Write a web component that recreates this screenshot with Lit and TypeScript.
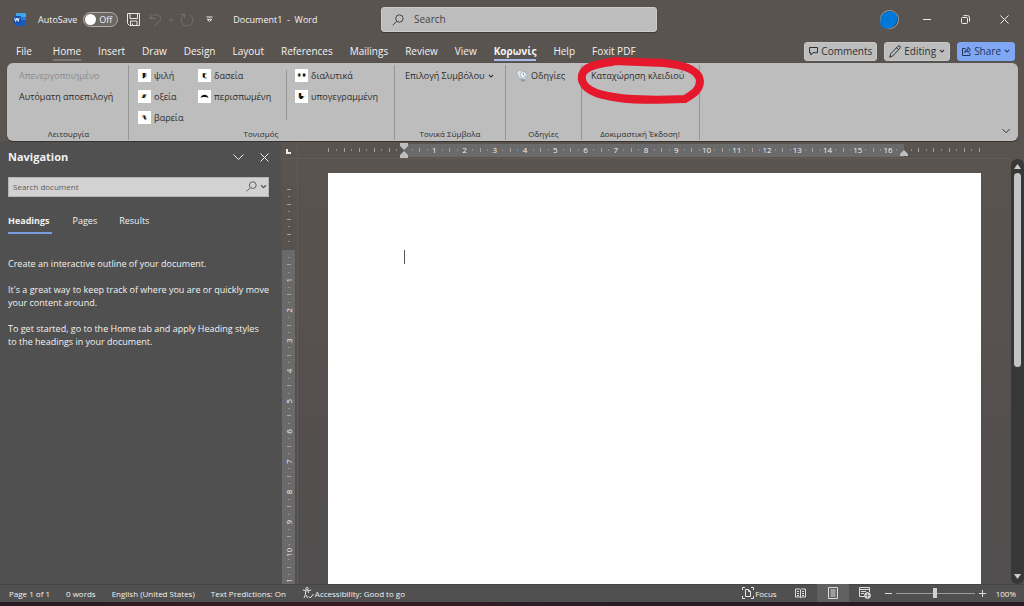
import { LitElement, html, svg, css } from "lit";
import { customElement } from "lit/decorators.js";
import { classMap } from "lit/directives/class-map.js";

const CM = 30.25;

const TABS = ["File", "Home", "Insert", "Draw", "Design", "Layout", "References", "Mailings", "Review", "View", "Κορωνίς", "Help", "Foxit PDF"];

const chevron = (size: number) => html`<svg width=${size} height=${size} viewBox="0 0 10 10" fill="none" stroke="currentColor" stroke-width=${size > 8 ? 1 : 1.8}><path d="M1.500 3.200 5 6.700 8.500 3.200" /></svg>`;

const GLYPHS: Record<string, unknown> = {
  psili: svg`<path d="M4.600 4h2.800v3.600L5.600 9.600 4.400 9l.8-1.800h-.8z" fill="#111"/><path d="M4 4h1v3H4z" fill="#e8a860"/><path d="M7.200 4h1.400v3.400L6.400 9.600l.8-2z" fill="#4a97d8"/>`,
  oxia: svg`<path d="M5.400 4.400h2.800L6.600 8H4z" fill="#111"/><path d="M4.400 4.600h1.200L4.200 8H3.200z" fill="#e8a860"/><path d="M7.800 4.400H9L7.400 7.800H6.200z" fill="#5b9bd5"/>`,
  varia: svg`<path d="M4.400 4.400H7.200l1 4H6.600z" fill="#111"/><path d="M3.600 4.400h1.400l1.400 3H5z" fill="#e8a860"/><path d="M7 4.400l1.200.6.4 3.400H8z" fill="#5b9bd5"/>`,
  dasia: svg`<path d="M4.800 4.200h2.600L6.600 6l.8 3H6L4.600 7.600z" fill="#111"/><path d="M4 4.800h1v3.400l1 1L4 8z" fill="#e8a860"/><path d="M7.200 4h1.400v1.600H7.200zM6.400 8h2.200v1.400H6.400z" fill="#5b9bd5"/>`,
  perispomeni: svg`<path d="M2.600 8c.6-4.400 7.200-4.400 7.800 0L8 7H5z" fill="#111"/><path d="M2.400 8.200 4 6.600v1.200z" fill="#e8a860"/><path d="M9 6.600l1.600 1.600L9 7.800z" fill="#5b9bd5"/>`,
  dialytika: svg`<path d="M3.200 4.600h2v2.800h-2zM8 4.600h2v2.800H8z" fill="#111"/><path d="M2.400 4.800h.9v2.400h-.9zM7.200 4.800h.9v2.400h-.9z" fill="#e8a860"/><path d="M5.200 4.800h.9v2.400h-.9zM10 4.800h.9v2.400H10z" fill="#5b9bd5"/>`,
  ypogegrammeni: svg`<path d="M4 3h2v3h3L7 9H5.200L4 7.600z" fill="#111"/><path d="M3.200 3.200h1v4l1.200 1.800-2.200-1.400z" fill="#e8a860"/><path d="M6 3.400h.8v2H6zM9 5.600l.6.8L7.400 9z" fill="#5b9bd5"/>`,
};

@customElement("ribbon-mark")
class RibbonMark extends LitElement {
  static properties = { glyph: {}, label: {} };
  declare glyph: string;
  declare label: string;

  static styles = css`
    :host { display: block; }
    .mark { display: flex; align-items: center; gap: 3px; height: 21px; padding: 0; border: 0; background: none; color: #2c2c2c; font: 9px/14px "Open Sans", "Noto Sans", sans-serif; white-space: nowrap; }
    .tile { display: block; background: #fff; }
  `;

  render() {
    return html`<button class="mark"><svg class="tile" width="13" height="13" viewBox="0 0 13 13">${GLYPHS[this.glyph]}</svg>${this.label}</button>`;
  }
}

@customElement("app-root")
class AppRoot extends LitElement {
  static styles = css`
    :host { display: grid; grid-template-rows: 39px 24px 79px minmax(0, 1fr) 18px 4px; height: 100vh; overflow: hidden; position: relative; background: #5a5450; color: #f2f2f2; font: 9px/13px "Open Sans", "Noto Sans", sans-serif; }
    * { box-sizing: border-box; }
    svg { display: block; flex: none; }
    button { font: inherit; color: inherit; background: none; border: 0; padding: 0; margin: 0; white-space: nowrap; }
    input { font: inherit; margin: 0; }

    .title { display: grid; grid-template-columns: 381fr 276fr 367fr; align-items: center; }
    .quick { display: flex; align-items: center; padding-left: 13px; white-space: nowrap; }
    .autosave { display: flex; align-items: center; gap: 6px; margin-left: 12px; }
    .toggle { display: flex; align-items: center; position: relative; }
    .toggle input { appearance: none; width: 35px; height: 15px; border: 1px solid #b0adab; border-radius: 8px; background: #6b6765; padding: 1px; }
    .toggle input::before { content: ""; display: block; width: 11px; height: 11px; border-radius: 50%; background: #fff; }
    .state { position: absolute; right: 6px; }
    .save { margin-left: 9px; }
    .faint { color: #77716d; display: flex; align-items: center; gap: 6px; margin-left: 9px; }
    .more { margin-left: 12px; }
    .name { margin-left: 20px; }
    .search { display: flex; align-items: center; gap: 10px; height: 25px; padding: 0 10px; background: #bdbdbd; border: 1px solid #cbcbcb; border-radius: 3px; color: #444; box-shadow: 0 1px 1px #3d3937; }
    .search input, .find input { flex: 1; min-width: 0; background: none; border: 0; padding: 0; outline: 0; color: #333; }
    .search input { font-size: 10px; }
    .search input::placeholder { color: #444; opacity: 1; }
    .window { display: flex; justify-content: flex-end; align-items: center; gap: 23px; padding-right: 15px; }
    .controls { display: flex; align-items: center; gap: 30px; }

    .tabs { display: flex; align-items: center; padding: 0 9px 0 16px; font-size: 10px; line-height: 15px; white-space: nowrap; }
    .strip { display: flex; gap: 17px; }
    .tab { height: 19px; padding-top: 2px; border-bottom: 2px solid transparent; }
    .tab.first { margin-right: 4px; }
    .tab.home { border-color: #7b7775; }
    .tab.current { border-color: #a9bce8; font-weight: 700; }
    .actions { display: flex; gap: 7px; margin-left: auto; }
    .action { display: flex; align-items: center; gap: 3px; height: 19px; padding: 0 4px; border-radius: 3px; background: #bdbdbd; color: #2f2f2f; border: 1px solid #c7c7c7; }
    .action.share { background: #80a7f3; border-color: #80a7f3; color: #25355c; }

    .ribbon { display: flex; margin: 0 6px 1px 7px; background: #bdbdbd; border-radius: 6px; color: #2c2c2c; box-shadow: 0 1px 1px #33302e; }
    .group { display: flex; flex-direction: column; justify-content: space-between; margin: 2px 0 0; border-right: 1px solid #969696; height: 75px; }
    .caption { text-align: center; font-size: 8px; line-height: 12px; }
    .cols { display: flex; }
    .cmd { display: flex; align-items: center; gap: 3px; height: 21px; }
    .off { color: #8b8b8b; }
    .mode { width: 122px; padding-left: 12px; }
    .mode .caption, .accents .caption, .symbols .caption, .guides .caption, .trial .caption { margin-left: -10px; }
    .accents { width: 266px; padding-left: 9px; }
    .col.one { width: 60px; }
    .col.two { width: 88px; }
    .col.three { position: relative; padding-left: 9px; }
    .col.three::before { content: ""; position: absolute; left: 0; top: 5px; width: 1px; height: 50px; background: #969696; }
    .symbols { width: 111px; padding-left: 10px; }
    .guides { width: 76px; padding-left: 10px; }
    .trial { width: 118px; padding-left: 9px; }
    .collapse { margin: auto 7px 5px auto; }

    .work { display: grid; grid-template-columns: 281px 17px minmax(0, 1fr) 13px; min-height: 0; background: linear-gradient(#5a544f, #554f4f 60%, #514f4f); overflow: hidden; }
    .nav { background: #505050; padding: 6px 12px 0 8px; }
    .navhead { display: flex; align-items: center; gap: 15px; height: 18px; }
    .heading { margin: 0 auto 0 0; font-size: 11px; line-height: 18px; font-weight: 700; }
    .find { display: flex; align-items: center; gap: 3px; height: 20px; margin-top: 11px; padding: 0 1px 1px 4px; border: 1px solid #b5b5b5; background: #d2d2d2; color: #555; }
    .find input { font-size: 8px; }
    .find input::placeholder { color: #5c5c5c; opacity: 1; }
    .navtabs { display: flex; gap: 21px; margin-top: 15px; }
    .navtab { height: 22px; border-bottom: 2px solid transparent; display: flex; align-items: center; padding: 0 1px 4px 0; }
    .navtab.current { font-weight: 700; border-color: #7a9de0; padding-right: 2px; }
    .help { margin: 23px -8px 0 0; }
    .help p { margin: 0 0 13px; }

    .side { border-right: 1px solid #625c58; display: grid; grid-template-rows: 17px 1fr; overflow: hidden; }
    .corner { border-bottom: 1px solid #625c58; padding: 7px 0 0 5px; }
    .desk { display: grid; grid-template-rows: 17px minmax(0, 1fr); overflow: hidden; }
    .across { border-bottom: 1px solid #625c58; }
    .page { width: 653px; margin: 14px 0 0 30px; padding: 77px 76px; background: #fff; }
    .caret { width: 1px; height: 14px; background: #555; }
    .scroll { display: flex; flex-direction: column; align-items: center; justify-content: space-between; background: #383838; border-radius: 6px; margin: 17px 0 0; padding: 5px 2px; }
    .bar { width: 7px; flex: 0 0 194px; border-radius: 4px; background: #c4c4c4; margin: 4px 0 auto; }
    .num { font: 8px "Open Sans", "Noto Sans", sans-serif; fill: #f0f0f0; text-anchor: middle; }

    .status { display: flex; align-items: center; gap: 16px; padding: 0 8px 0 9px; background: #505050; box-shadow: inset 0 1px #444; font-size: 8px; white-space: nowrap; }
    .item { display: flex; align-items: center; gap: 1px; }
    .views { display: flex; align-items: center; margin-left: auto; height: 18px; }
    .view { display: grid; place-items: center; width: 32px; height: 18px; }
    .view.on { background: #606060; }
    .focus { margin-right: 8px; }
    .zoom { display: flex; align-items: center; gap: 4px; margin-left: -12px; }
    .zoom input { appearance: none; width: 79px; height: 11px; background: linear-gradient(#9b9b9b, #9b9b9b) center / 100% 1px no-repeat; }
    .zoom input::-webkit-slider-thumb { appearance: none; width: 4px; height: 10px; background: #d0d0d0; }
    .percent { margin-left: -6px; }
    .desktop { background: linear-gradient(90deg, #281c22, #371b20 35%, #281d26 60%, #2a1a23); }
    .ink { position: absolute; left: 574px; top: 52px; pointer-events: none; }
  `;

  private across() {
    const parts = [];
    const origin = 106;
    for (let q = -10; q <= 76; q++) {
      const x = origin + (q * CM) / 4;
      const inside = q > 0 && q < 66;
      if (q === 0 || q === 66) continue;
      if (inside && q % 4 === 0) parts.push(svg`<text class="num" x=${x} y="11">${q / 4}</text>`);
      else if (q % 2 === 0) parts.push(svg`<rect x=${Math.round(x)} y="6" width="1" height="4" fill="#a5a19f"/>`);
      else parts.push(svg`<rect x=${Math.round(x)} y="7" width="1" height="2" fill="#918d8b"/>`);
    }
    return html`<svg width="712" height="16">
      <rect x="106" y="2" width="500" height="13" fill="#6a6a6a"/>${parts}
      <path d="M102 1h8v3l-4 4-4-4zM102 16v-3l4-4 4 4v3zM602 14v-2l4-4 4 4v2z" fill="#bebebe"/>
    </svg>`;
  }

  private down() {
    const parts = [];
    const origin = 91;
    for (let q = -8; q <= 46; q++) {
      const y = origin + (q * CM) / 4;
      if (q === 0) continue;
      if (q > 0 && q % 4 === 0) parts.push(svg`<text class="num" transform="translate(11 ${y}) rotate(-90)">${q / 4}</text>`);
      else if (q % 2 === 0) parts.push(svg`<rect x="6" y=${Math.round(y) - 1} width="4" height="1" fill="#a5a19f"/>`);
      else parts.push(svg`<rect x="7" y=${Math.round(y) - 1} width="2" height="1" fill="#918d8b"/>`);
    }
    return html`<svg width="16" height="425"><rect x="1" y="91" width="13" height="334" fill="#6a6a6a"/>${parts}</svg>`;
  }

  private magnifier(size: number) {
    return html`<svg width=${size} height=${size} viewBox="0 0 12 12" fill="none" stroke="currentColor"><circle cx="7.400" cy="4.500" r="3.700"/><path d="M4.800 7.200.6 11.400"/></svg>`;
  }

  render() {
    return html`
      <header class="title">
        <div class="quick">
          <svg width="13" height="13" viewBox="0 0 13 13"><rect x="3" y="0" width="10" height="13" rx="1" fill="#185abd"/><path d="M3 1q0-1 1-1h8q1 0 1 1v3H3z" fill="#41a5ee"/><path d="M3 4h10v3H3z" fill="#2b7cd3"/><rect x="0" y="3" width="8" height="7" rx="1" fill="#1450ad"/><path d="m1.700 4.800.9 3.600 1.300-3.400 1.300 3.400.9-3.600" fill="none" stroke="#fff" stroke-width=".9"/></svg>
          <div class="autosave"><label for="auto">AutoSave</label><span class="toggle"><input id="auto" type="checkbox"><span class="state">Off</span></span></div>
          <button class="save" aria-label="Save"><svg width="13" height="13" viewBox="0 0 13 13" fill="none" stroke="#e8e8e8"><path d="M.5.5h12v12h-10l-2-2zM3 .5v5h7.500v-5M3.500 12.500v-4.500h6.500v4.500M5.500 10.500v2"/></svg></button>
          <div class="faint">
            <button aria-label="Undo"><svg width="13" height="14" viewBox="0 0 13 14" fill="none" stroke="currentColor"><path d="M1.500.8v4.700h4.800M1.700 5.300C4 1.500 8 .7 10.200 2.800c2 2 1.500 4.200 0 5.700L5 13.400"/></svg></button>
            ${chevron(6)}
            <button aria-label="Repeat"><svg width="14" height="14" viewBox="0 0 14 14" fill="none" stroke="currentColor"><path d="M4.500 1.500h-4M4.500 1v4M4.300 1.800A5.900 5.900 0 1 0 9.700 1.700"/></svg></button>
          </div>
          <button class="more" aria-label="Customize toolbar"><svg width="7" height="7" viewBox="0 0 7 7"><path d="M.5 1h6M1.200 3.300h4.600L3.500 5.700z" fill="none" stroke="#eee"/></svg></button>
          <span class="name">Document1&nbsp; -&nbsp; Word</span>
        </div>
        <div class="search">${this.magnifier(12)}<input aria-label="Search" placeholder="Search"></div>
        <div class="window">
          <svg width="21" height="21" viewBox="0 0 21 21"><circle cx="10.500" cy="10.500" r="9" fill="#3d3935" stroke="#a8a297"/><path d="M1.500 11C1.500 4 9 1 14 2.800c3 1 5 4.200 4.200 8.200-.2 3-1.700 4-3.200 6-3 3-9 3.500-12 1C1 16 1 13 1.500 11z" fill="#0078d7"/></svg>
          <div class="controls">
            <button aria-label="Minimize"><svg width="8" height="9"><path d="M0 4.500h8" stroke="#eee"/></svg></button>
            <button aria-label="Restore"><svg width="9" height="9" viewBox="0 0 9 9" fill="none" stroke="#eee"><rect x=".5" y="2.500" width="6" height="6" rx="1"/><path d="M2.500.6h4q2 0 2 2v4"/></svg></button>
            <button aria-label="Close"><svg width="9" height="9" viewBox="0 0 9 9" stroke="#eee"><path d="m.5.5 8 8M8.500.5l-8 8"/></svg></button>
          </div>
        </div>
      </header>

      <div class="tabs">
        <nav class="strip">${TABS.map((t, i) => html`<button class=${classMap({ tab: true, first: i === 0, home: i === 1, current: i === 10 })}>${t}</button>`)}</nav>
        <div class="actions">
          <button class="action"><svg width="9" height="10" viewBox="0 0 9 10" fill="none" stroke="currentColor"><path d="M.5 1.500h8v5.200H4L1.800 9V6.700H.5z"/></svg>Comments</button>
          <button class="action"><svg width="12" height="13" viewBox="0 0 12 13" fill="none" stroke="currentColor"><path d="M.8 12.200 1.800 8.700 9 1.200q1-.9 1.900 0t0 2L3.800 10.900zM7.600 2.700l1.900 2"/></svg>Editing ${chevron(6)}</button>
          <button class="action share"><svg width="9" height="10" viewBox="0 0 9 10" fill="none" stroke="currentColor"><path d="M3.500 2.500h-3v7h7.500V7M2.500 6.500q.5-3 3.500-3V1.200l2.600 2.900L6 6.500V5Q3.800 5 2.500 6.500z"/></svg>Share ${chevron(6)}</button>
        </div>
      </div>

      <section class="ribbon">
        <div class="group mode"><div><button class="cmd off">Απενεργοποιημένο</button><button class="cmd">Αυτόματη αποεπιλογή</button></div><div class="caption">Λειτουργία</div></div>
        <div class="group accents">
          <div class="cols">
            <div class="col one"><ribbon-mark glyph="psili" label="ψιλή"></ribbon-mark><ribbon-mark glyph="oxia" label="οξεία"></ribbon-mark><ribbon-mark glyph="varia" label="βαρεία"></ribbon-mark></div>
            <div class="col two"><ribbon-mark glyph="dasia" label="δασεία"></ribbon-mark><ribbon-mark glyph="perispomeni" label="περισπωμένη"></ribbon-mark></div>
            <div class="col three"><ribbon-mark glyph="dialytika" label="διαλυτικά"></ribbon-mark><ribbon-mark glyph="ypogegrammeni" label="υπογεγραμμένη"></ribbon-mark></div>
          </div>
          <div class="caption">Τονισμός</div>
        </div>
        <div class="group symbols"><button class="cmd">Επιλογή Συμβόλου ${chevron(6)}</button><div class="caption">Τονικά Σύμβολα</div></div>
        <div class="group guides"><button class="cmd"><svg width="12" height="12" viewBox="0 0 12 12"><path d="M.5 2 3.500.5l7 1.500.8 4-2.800 3.500L3 8z" fill="#dfe8ee" stroke="#8c98a1" stroke-width=".5"/><circle cx="7.300" cy="4.600" r="3" fill="#f6f8fa" stroke="#7b93a5" stroke-width=".6"/><path d="M7.300 2.800v1.900l1.200.8" stroke="#66798a" fill="none" stroke-width=".8"/><path d="M4.500 9.200h4l1 2h-4z" fill="#8798a5"/></svg>Οδηγίες</button><div class="caption">Οδηγίες</div></div>
        <div class="group trial"><button class="cmd">Καταχώρηση κλειδιού</button><div class="caption">Δοκιμαστική Έκδοση!</div></div>
        <button class="collapse" aria-label="Collapse ribbon">${chevron(10)}</button>
      </section>

      <main class="work">
        <aside class="nav">
          <div class="navhead"><h2 class="heading">Navigation</h2><button aria-label="Options"><svg width="13" height="8" viewBox="0 0 13 8"><path d="m1.500 1.500 5 5 5-5" fill="none" stroke="#eee"/></svg></button><button aria-label="Close pane"><svg width="9" height="9" viewBox="0 0 9 9" stroke="#eee"><path d="m.5.5 8 8M8.500.5l-8 8"/></svg></button></div>
          <div class="find"><input aria-label="Search document" placeholder="Search document">${this.magnifier(11)}${chevron(7)}</div>
          <div class="navtabs"><button class="navtab current">Headings</button><button class="navtab">Pages</button><button class="navtab">Results</button></div>
          <div class="help">
            <p>Create an interactive outline of your document.</p>
            <p>It's a great way to keep track of where you are or quickly move<br>your content around.</p>
            <p>To get started, go to the Home tab and apply Heading styles<br>to the headings in your document.</p>
          </div>
        </aside>
        <div class="side"><div class="corner"><svg width="5" height="5"><path d="M1 0v4h4" stroke="#eee" stroke-width="2" fill="none"/></svg></div>${this.down()}</div>
        <div class="desk"><div class="across">${this.across()}</div><div class="page"><div class="caret"></div></div></div>
        <div class="scroll"><svg width="7" height="5"><path d="M3.500 0 7 5H0z" fill="#ccc"/></svg><div class="bar"></div><svg width="7" height="5"><path d="M0 0h7L3.500 5z" fill="#ccc"/></svg></div>
      </main>

      <footer class="status">
        <span class="item">Page 1 of 1</span><span class="item">0 words</span><span class="item">English (United States)</span><span class="item">Text Predictions: On</span>
        <span class="item"><svg width="12" height="12" viewBox="0 0 12 12" fill="none" stroke="#e5e5e5"><circle cx="5" cy="1.700" r="1.200"/><path d="M.8 3q4 2 8.400 0M3.500 4.300v3L2 11M6.500 4.300V6M4 8l1.500 3M6.500 9.200l1.800 1.800 3.200-4"/></svg>Accessibility: Good to go</span>
        <div class="views">
          <button class="item focus"><svg width="12" height="12" viewBox="0 0 12 12" fill="none" stroke="#e5e5e5"><path d="M.5 3V.5H3M9 .5h2.500V3M11.500 9v2.500H9M3 11.500H.5V9M3.500 2.500h3l2 2v5h-5zM6.500 2.500v2h2"/></svg>Focus</button>
          <button class="view" aria-label="Read mode"><svg width="11" height="11" viewBox="0 0 11 11" fill="none" stroke="#ddd"><path d="M.5 1h4.200l.8.7.8-.7h4.200v8H6.300l-.8.8-.8-.8H.5zM5.500 2v7.500M2 3.500h2M2 5.500h2M2 7.500h2M7 3.500h2M7 5.500h2M7 7.500h2"/></svg></button>
          <button class="view on" aria-label="Print layout"><svg width="10" height="12" viewBox="0 0 10 12" fill="none" stroke="#ddd"><path d="M.5.5h9v11h-9zM2.500 3h5M2.500 5h5M2.500 7h5M2.500 9h5"/></svg></button>
          <button class="view" aria-label="Web layout"><svg width="12" height="12" viewBox="0 0 12 12" fill="none" stroke="#ddd"><path d="M5.500 9.500h-5v-9h10V5M.5 2.500h10M2 4.500h5M2 6.500h3"/><circle cx="8.500" cy="8.500" r="2.900" fill="#ddd"/><path d="M8.500 6v5M6.500 8.500h4" stroke="#555" stroke-width=".7"/></svg></button>
        </div>
        <div class="zoom"><button aria-label="Zoom out"><svg width="7" height="7"><path d="M0 3.500h7" stroke="#ddd"/></svg></button><input type="range" min="0" max="100" value="50" aria-label="Zoom"><button aria-label="Zoom in"><svg width="7" height="7"><path d="M0 3.500h7M3.500 0v7" stroke="#ddd"/></svg></button></div>
        <span class="percent">100%</span>
      </footer>
      <div class="desktop"></div>

      <svg class="ink" width="134" height="56" viewBox="574 52 134 56" fill="none" stroke="#e6182c" stroke-width="8" stroke-linecap="round" stroke-linejoin="round"><path d="M612 62C595 64 584 67 582 75C580 85 590 93 608 96C630 101 660 100 685 99C693 94 700 90 700 81C699 70 685 65 664 63L614 61"/></svg>
    `;
  }
}
